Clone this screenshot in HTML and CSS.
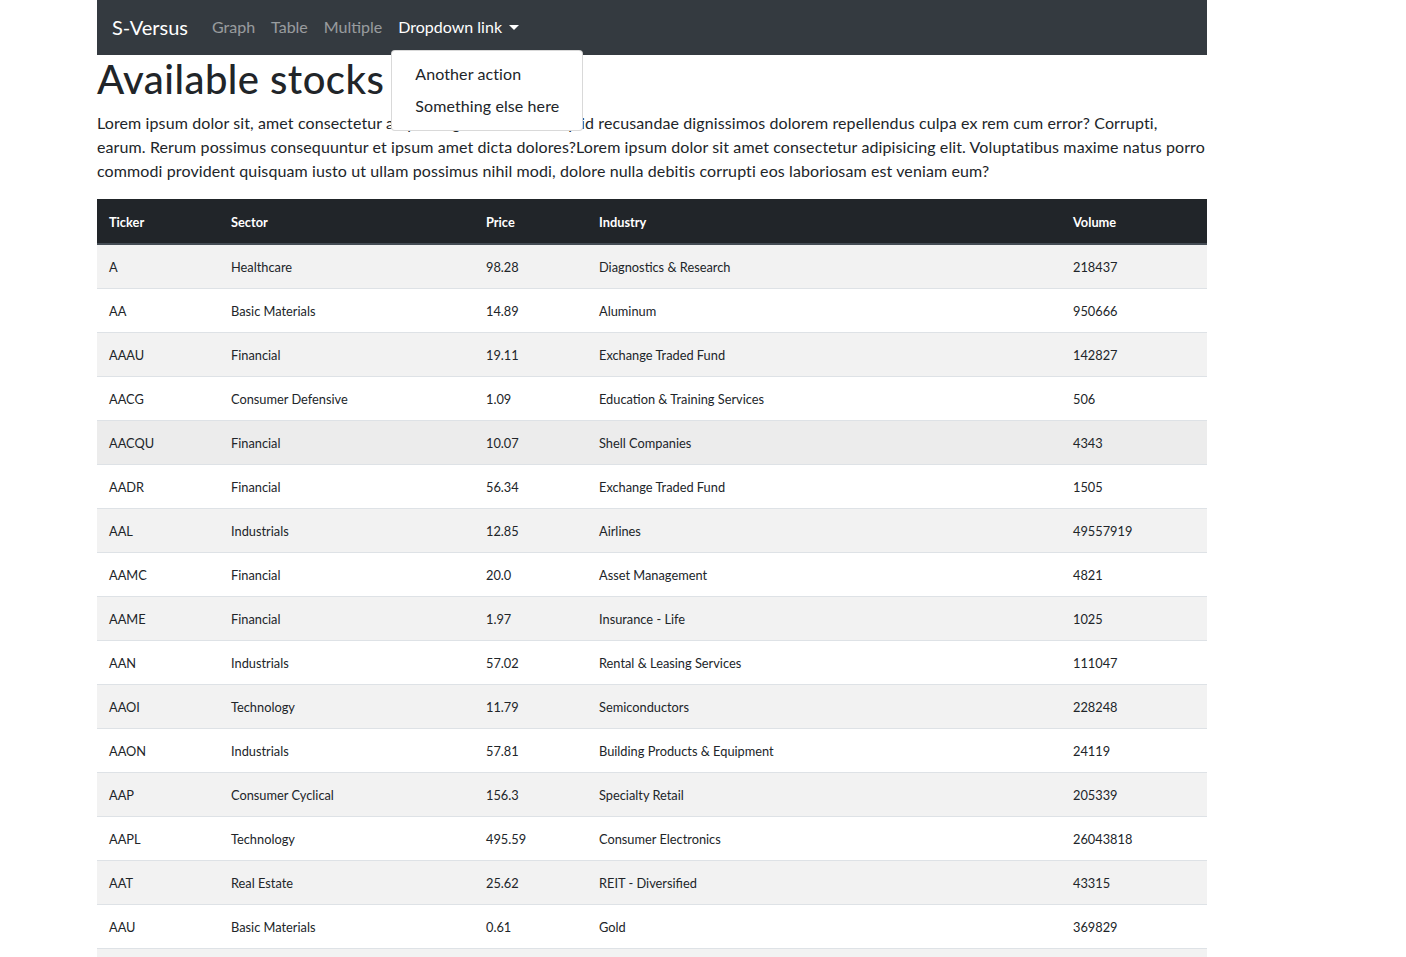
FILE: index.html
```html
<!DOCTYPE html>
<html lang="en">
<head>
<meta charset="utf-8">
<title>S-Versus</title>
<link rel="stylesheet" href="styles.css">
</head>
<body>
<div class="container">
  <nav class="navbar">
    <a class="brand" href="#">S-Versus</a>
    <ul class="nav">
      <li><a class="nav-link" href="#">Graph</a></li>
      <li><a class="nav-link" href="#">Table</a></li>
      <li><a class="nav-link" href="#">Multiple</a></li>
      <li class="dropdown">
        <a class="nav-link active" href="#">Dropdown link<span class="caret"></span></a>
        <div class="dropdown-menu">
          <a class="dropdown-item" href="#">Another action</a>
          <a class="dropdown-item" href="#">Something else here</a>
        </div>
      </li>
    </ul>
  </nav>

  <h1 class="title">Available stocks</h1>
  <p class="lead-text">Lorem ipsum dolor sit, amet consectetur adipisicing elit. Officia aliquid recusandae dignissimos dolorem repellendus culpa ex rem cum error? Corrupti, earum. Rerum possimus consequuntur et ipsum amet dicta dolores?Lorem ipsum dolor sit amet consectetur adipisicing elit. Voluptatibus maxime natus porro commodi provident quisquam iusto ut ullam possimus nihil modi, dolore nulla debitis corrupti eos laboriosam est veniam eum?</p>

  <table class="stocks">
    <thead>
      <tr>
        <th class="c-ticker">Ticker</th>
        <th class="c-sector">Sector</th>
        <th class="c-price">Price</th>
        <th class="c-industry">Industry</th>
        <th class="c-volume">Volume</th>
      </tr>
    </thead>
    <tbody>
      <tr><td>A</td><td>Healthcare</td><td>98.28</td><td>Diagnostics &amp; Research</td><td>218437</td></tr>
      <tr><td>AA</td><td>Basic Materials</td><td>14.89</td><td>Aluminum</td><td>950666</td></tr>
      <tr><td>AAAU</td><td>Financial</td><td>19.11</td><td>Exchange Traded Fund</td><td>142827</td></tr>
      <tr><td>AACG</td><td>Consumer Defensive</td><td>1.09</td><td>Education &amp; Training Services</td><td>506</td></tr>
      <tr class="hover"><td>AACQU</td><td>Financial</td><td>10.07</td><td>Shell Companies</td><td>4343</td></tr>
      <tr><td>AADR</td><td>Financial</td><td>56.34</td><td>Exchange Traded Fund</td><td>1505</td></tr>
      <tr><td>AAL</td><td>Industrials</td><td>12.85</td><td>Airlines</td><td>49557919</td></tr>
      <tr><td>AAMC</td><td>Financial</td><td>20.0</td><td>Asset Management</td><td>4821</td></tr>
      <tr><td>AAME</td><td>Financial</td><td>1.97</td><td>Insurance - Life</td><td>1025</td></tr>
      <tr><td>AAN</td><td>Industrials</td><td>57.02</td><td>Rental &amp; Leasing Services</td><td>111047</td></tr>
      <tr><td>AAOI</td><td>Technology</td><td>11.79</td><td>Semiconductors</td><td>228248</td></tr>
      <tr><td>AAON</td><td>Industrials</td><td>57.81</td><td>Building Products &amp; Equipment</td><td>24119</td></tr>
      <tr><td>AAP</td><td>Consumer Cyclical</td><td>156.3</td><td>Specialty Retail</td><td>205339</td></tr>
      <tr><td>AAPL</td><td>Technology</td><td>495.59</td><td>Consumer Electronics</td><td>26043818</td></tr>
      <tr><td>AAT</td><td>Real Estate</td><td>25.62</td><td>REIT - Diversified</td><td>43315</td></tr>
      <tr><td>AAU</td><td>Basic Materials</td><td>0.61</td><td>Gold</td><td>369829</td></tr>
      <tr><td>AAWW</td><td>Industrials</td><td>63.53</td><td>Airports &amp; Air Services</td><td>462615</td></tr>
      <tr><td>AAXJ</td><td>Financial</td><td>73.9</td><td>Exchange Traded Fund</td><td>530401</td></tr>
    </tbody>
  </table>
</div>
</body>
</html>
```

FILE: styles.css
```css
* { box-sizing: border-box; }

html, body {
  margin: 0;
  padding: 0;
}

body {
  font-family: "Lato", "Noto Sans", sans-serif;
  font-size: 16px;
  line-height: 1.5;
  color: #212529;
  background: #fff;
}

.container {
  width: 1110px;
  margin-left: 97px;
}

.navbar {
  display: flex;
  align-items: center;
  height: 55px;
  padding: 0 16px 1px 15px;
  background: #343a40;
  position: relative;
}

.brand {
  font-size: 20px;
  line-height: 30px;
  color: #fff;
  text-decoration: none;
  margin-right: 16px;
  padding: 5px 0;
}

.nav {
  display: flex;
  list-style: none;
  margin: 0;
  padding: 0;
}

.nav-link {
  display: block;
  padding: 8px 8px;
  color: rgba(255, 255, 255, 0.5);
  text-decoration: none;
  font-size: 16px;
  line-height: 24px;
}

.nav-link.active {
  color: #fff;
}

.caret {
  display: inline-block;
  margin-left: 7px;
  vertical-align: 3px;
  border-top: 5px solid #fff;
  border-left: 5px solid transparent;
  border-right: 5px solid transparent;
}

.dropdown {
  position: relative;
}

.dropdown-menu {
  position: absolute;
  top: 43px;
  left: 1px;
  width: 192px;
  padding: 7px 0 8px;
  background: #fff;
  border: 1px solid rgba(0, 0, 0, 0.15);
  border-radius: 4px;
  z-index: 10;
}

.dropdown-item {
  display: block;
  padding: 4px 23px;
  color: #212529;
  text-decoration: none;
  white-space: nowrap;
  line-height: 24px;
  letter-spacing: 0.1px;
}

.title {
  margin: 0 0 8px;
  font-size: 40px;
  line-height: 48px;
  font-weight: 500;
  letter-spacing: 0.45px;
}

.lead-text {
  margin: 0 0 16px;
  font-size: 16px;
  line-height: 24px;
  letter-spacing: 0.11px;
}

.stocks {
  width: 1110px;
  border-collapse: collapse;
  font-size: 12.8px;
  line-height: 19px;
}

.stocks th,
.stocks td {
  text-align: left;
  padding: 13px 12px 11px;
  vertical-align: top;
}

.stocks thead th {
  padding: 14px 12px 11px;
  background: #212529;
  color: #fff;
  font-weight: 700;
  border-bottom: 2px solid #454d55;
}

.stocks td {
  border-top: 1px solid #dee2e6;
}

.stocks tbody tr:nth-child(odd) {
  background: #f2f2f2;
}

.stocks tbody tr.hover {
  background: #ececec;
}

.c-ticker { width: 122px; }
.c-sector { width: 255px; }
.c-price { width: 113px; }
.c-industry { width: 474px; }
.c-volume { width: 146px; }
```
